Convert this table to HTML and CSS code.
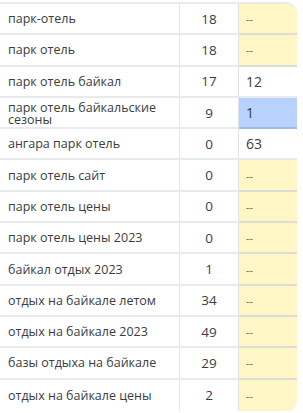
FILE: index.html
```html
<!DOCTYPE html>
<html lang="ru">
<head>
<meta charset="utf-8">
<link rel="stylesheet" href="styles.css">
</head>
<body>
<div class="card">
  <div class="row"><div class="kw">парк-отель</div><div class="num">18</div><div class="pos empty">--</div></div>
  <div class="row"><div class="kw">парк отель</div><div class="num">18</div><div class="pos empty">--</div></div>
  <div class="row"><div class="kw">парк отель байкал</div><div class="num">17</div><div class="pos">12</div></div>
  <div class="row"><div class="kw two">парк отель байкальские сезоны</div><div class="num">9</div><div class="pos top">1</div></div>
  <div class="row"><div class="kw">ангара парк отель</div><div class="num">0</div><div class="pos">63</div></div>
  <div class="row"><div class="kw">парк отель сайт</div><div class="num">0</div><div class="pos empty">--</div></div>
  <div class="row"><div class="kw">парк отель цены</div><div class="num">0</div><div class="pos empty">--</div></div>
  <div class="row"><div class="kw">парк отель цены 2023</div><div class="num">0</div><div class="pos empty">--</div></div>
  <div class="row"><div class="kw">байкал отдых 2023</div><div class="num">1</div><div class="pos empty">--</div></div>
  <div class="row"><div class="kw">отдых на байкале летом</div><div class="num">34</div><div class="pos empty">--</div></div>
  <div class="row"><div class="kw">отдых на байкале 2023</div><div class="num">49</div><div class="pos empty">--</div></div>
  <div class="row"><div class="kw">базы отдыха на байкале</div><div class="num">29</div><div class="pos empty">--</div></div>
  <div class="row"><div class="kw">отдых на байкале цены</div><div class="num">2</div><div class="pos empty">--</div></div>
</div>
</body>
</html>
```
FILE: styles.css
```css
html, body {
  margin: 0;
  padding: 0;
  background: #fff;
}
body {
  padding-top: 2px;
  font-family: "Open Sans", "Liberation Sans", sans-serif;
  color: #3a3d42;
}
.card {
  width: 297px;
  border-radius: 0 11px 11px 0;
  overflow: hidden;
  border-top: 2px solid #e8eaee;
  box-shadow: 0 1px 1px rgba(0,0,0,0.06);
}
.row {
  display: grid;
  grid-template-columns: 180px 59px 58px;
  height: 31.3px;
  box-sizing: border-box;
  border-bottom: 2px solid #e8eaee;
}
.row:last-child {
  border-bottom: none;
}
.kw {
  display: flex;
  align-items: center;
  padding-left: 8px;
  font-size: 12.5px;
  border-right: 1px solid #e6e8ec;
}
.kw.two {
  line-height: 12px;
  padding-top: 2px;
  padding-right: 18px;
}
.num {
  display: flex;
  align-items: center;
  justify-content: center;
  font-size: 13.5px;
  border-right: 1px solid #dde1e8;
}
.pos {
  display: flex;
  align-items: center;
  padding-left: 7px;
  font-size: 14px;
  margin-bottom: -2px;
  border-bottom: 2px solid #e8eaee;
}
.row:last-child .pos { border-bottom: none; margin-bottom: 0; }
.pos.empty {
  background: #fff6c6;
  font-size: 11px;
  color: #6b6a60;
  border-bottom-color: #dcdcd6;
}
.pos.top {
  background: #b6d2fd;
  border-bottom-color: #9fbce8;
}
```
